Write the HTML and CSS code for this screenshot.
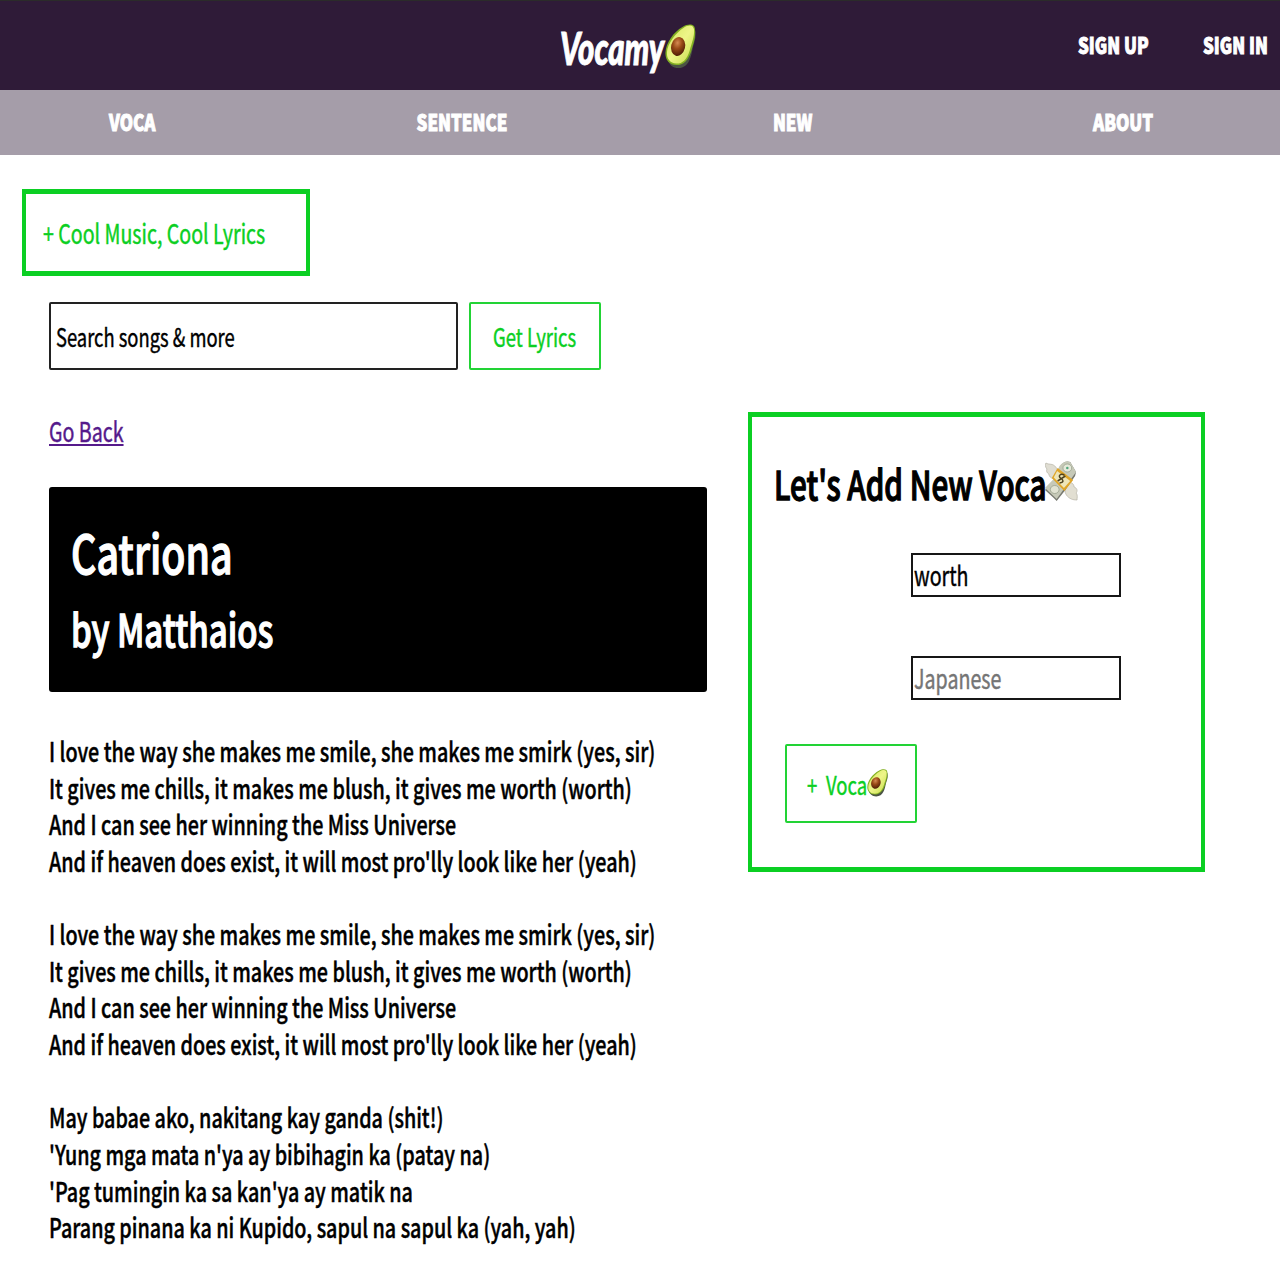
FILE: index.html
```html
<!DOCTYPE html>
<html lang="en">
<head>
<meta charset="utf-8">
<title>Vocamy</title>
<link rel="stylesheet" href="styles.css">
</head>
<body>
<svg class="defs" width="0" height="0" aria-hidden="true">
  <defs>
    <linearGradient id="flesh" x1="0" y1="0" x2="1" y2="1"><stop offset="0" stop-color="#d3e55c"/><stop offset=".5" stop-color="#eef589"/><stop offset="1" stop-color="#c3da45"/></linearGradient>
    <radialGradient id="pit" cx=".4" cy=".32" r=".7"><stop offset="0" stop-color="#d58a52"/><stop offset=".45" stop-color="#9a4a17"/><stop offset="1" stop-color="#4f1d06"/></radialGradient>
    <symbol id="avocado" viewBox="0 0 32 46" preserveAspectRatio="none">
      <path d="M30 4C33 10 31 17 29 23C27 33 25 45 14 45C8 45 4 41 3 37Z" fill="#4b5444"/>
      <path d="M18 3C25-1 31 0 31 6C32 13 29 21 27 28C24 37 19 42 12 42C4 42 0 36 .5 29C1 19 9 8 18 3Z" fill="#83b022"/>
      <path d="M19 4C25 0 29.500 1 30 6C30.500 13 27.500 20 25.500 27C23 36 18 40.500 12 40.500C5 40.500 1.500 35 2 29C2.500 20 11 9 19 4Z" fill="url(#flesh)"/>
      <ellipse cx="13.500" cy="23" rx="7.200" ry="9.700" transform="rotate(14 13.500 23)" fill="url(#pit)"/>
    </symbol>
    <symbol id="money" viewBox="0 0 34 40" preserveAspectRatio="none">
      <path d="M12 17C8 19 4 16 4 13C2 12 1 10 2 8C0 6 0 3 1 2C4 4 8 2 11 6C14 9 14 13 12 17Z" fill="#dfddd2" stroke="#b5b2a5" stroke-width=".7"/>
      <path d="M22 23C26 19 30 23 30 26C33 27 34 30 32 32C34 34 33 37 33 39C29 39 25 38 22 34C20 31 20 27 22 23Z" fill="#e2dfd2" stroke="#b5b2a5" stroke-width=".7"/>
      <path d="M0 29L8 20L15 6Q20-1 26 1L32 11L31 15L21 29L12 40L9 37Z" fill="#777970"/>
      <path d="M0 27L8 19L15 5Q20-1 26 1L32 11L21 26L12 38Z" fill="#c6c9b8"/>
      <ellipse cx="23" cy="7" rx="4.500" ry="4" fill="#e5e9d9" stroke="#929a86" stroke-width=".7"/>
      <circle cx="23" cy="7" r="1.300" fill="#4fa77c"/>
      <ellipse cx="10" cy="28.500" rx="4.500" ry="4" fill="#e1e3d3" stroke="#929a86" stroke-width=".7"/>
      <path d="M13 7L29 19L20 30L7 17Z" fill="#e0a526"/>
      <path d="M12.500 10L26 20L19.500 27L9 16.500Z" fill="#eee5b7"/>
      <path d="M20 14C16 12 13 15 16 17S20 21 15 22M13 20L21 15" fill="none" stroke="#4e431f" stroke-width="1.500"/>
    </symbol>
  </defs>
</svg>
<header class="top">
  <a class="logo"><span class="sq logo-text">Vocamy</span><svg class="logo-icon"><use href="#avocado"/></svg></a>
  <div class="auth"><span class="sq">SIGN UP</span><span class="sq">SIGN IN</span></div>
</header>
<nav class="menu"><span><b class="sq">VOCA</b></span><span><b class="sq">SENTENCE</b></span><span><b class="sq">NEW</b></span><span><b class="sq">ABOUT</b></span></nav>
<main>
  <div class="banner"><span class="sq">+ Cool Music, Cool Lyrics</span></div>
  <div class="search">
    <div class="search-field"><span class="sq">Search songs &amp; more</span></div>
    <div class="btn get"><span class="sq">Get Lyrics</span></div>
  </div>
  <div class="columns">
    <section class="song">
      <a class="back sq">Go Back</a>
      <div class="title">
        <h1><span class="sq">Catriona</span></h1>
        <h2><span class="sq">by Matthaios</span></h2>
      </div>
      <div class="lyrics sq">I love the way she makes me smile, she makes me smirk (yes, sir)
It gives me chills, it makes me blush, it gives me worth (worth)
And I can see her winning the Miss Universe
And if heaven does exist, it will most pro'lly look like her (yeah)

I love the way she makes me smile, she makes me smirk (yes, sir)
It gives me chills, it makes me blush, it gives me worth (worth)
And I can see her winning the Miss Universe
And if heaven does exist, it will most pro'lly look like her (yeah)

May babae ako, nakitang kay ganda (shit!)
'Yung mga mata n'ya ay bibihagin ka (patay na)
'Pag tumingin ka sa kan'ya ay matik na
Parang pinana ka ni Kupido, sapul na sapul ka (yah, yah)</div>
    </section>
    <section class="card">
      <h3><span class="sq">Let's Add New Voca</span><svg class="money"><use href="#money"/></svg></h3>
      <div class="field"><span class="sq">worth</span></div>
      <div class="field hint"><span class="sq">Japanese</span></div>
      <div class="btn add"><span class="sq plus">+</span><span class="sq voca">Voca</span><svg class="add-icon"><use href="#avocado"/></svg></div>
    </section>
  </div>
</main>
</body>
</html>
```
FILE: styles.css
```css
* { box-sizing: border-box; }
body {
  margin: 0;
  width: 1280px;
  height: 1280px;
  overflow: hidden;
  background: #fff;
  color: #000;
  font-family: "Noto Sans CJK JP", "Noto Sans", sans-serif;
  font-size: 26.5px;
}
h1, h2, h3 { margin: 0; font-weight: 500; -webkit-text-stroke: 1.3px; }
.defs { display: block; height: 0; }
svg { display: block; flex: none; }

/* Condensed lettering: each label is narrowed from its left edge. */
.sq {
  display: inline-block;
  white-space: nowrap;
  transform: scaleX(var(--s, .74));
  transform-origin: 0 50%;
}

.top {
  height: 90px;
  display: grid;
  grid-template-columns: 560px 1fr 202px;
  border-top: 1px solid #2b2b2a;
  background: #2f1b38;
  color: #fff;
}
.logo {
  grid-column: 2;
  display: flex;
}
.logo-text {
  --s: .69;
  width: 105px;
  font: italic 900 45px/94px Lato, sans-serif;
  -webkit-text-stroke: 1px;
}
.logo-icon { width: 31px; height: 45px; margin-top: 23px; }
.auth {
  --s: .77;
  display: grid;
  grid-template-columns: 125px 1fr;
  font: 900 22px/87px "Noto Sans CJK JP", sans-serif;
  -webkit-text-stroke: 1px;
}
.menu {
  --s: .77;
  height: 65px;
  margin: 0 -8px 0 -33px;
  display: grid;
  grid-template-columns: repeat(4, 1fr);
  background: #a59da9;
  color: #fff;
  text-align: center;
  font: 900 22px/63px "Noto Sans CJK JP", sans-serif;
  -webkit-text-stroke: 1px;
}
.menu .sq { font-weight: 900; transform-origin: 50% 50%; }

main {
  padding: 33.500px 0 0 22px;
  -webkit-text-stroke: .45px;
}
.banner {
  width: 287.500px;
  height: 87.500px;
  padding-left: 16.500px;
  border: solid #0bcf23;
  border-width: 5px 4px;
  color: #0bcf23;
  line-height: 77px;
}
.search {
  display: flex;
  gap: 11px;
  margin: 26px 0 0 27px;
  font-size: 25px;
  line-height: 64px;
}
.search-field {
  --s: .735;
  width: 409px;
  height: 68px;
  padding-left: 5px;
  border: 2px solid #222;
  border-radius: 2px;
}
.btn {
  border: 2px solid #22d335;
  border-radius: 2px;
  color: #0bcf23;
}
.get { width: 132px; height: 68px; padding-left: 22px; }

.columns {
  display: flex;
  gap: 41px;
  margin: 42px 0 0 27px;
}
.song { width: 658px; }
.back {
  display: block;
  width: max-content;
  height: 36px;
  line-height: 37px;
  color: #551a8b;
  text-decoration: underline;
}
.title {
  height: 205px;
  margin-top: 39px;
  padding: 25px 0 0 22px;
  border-radius: 3px;
  background: #000;
  color: #fff;
}
.title h1 { --s: .742; font-size: 53px; line-height: 78px; height: 83px; }
.title h2 { --s: .742; font-size: 44.500px; line-height: 65px; height: 65px; }
.lyrics {
  --s: .7455;
  display: block;
  width: max-content;
  margin-top: 41px;
  white-space: pre;
  font-weight: 500;
  line-height: 36.630px;
}

.card {
  width: 456.500px;
  height: 459.500px;
  padding: 36px 0 0 22px;
  border: solid #0bcf23;
  border-width: 5px 4px;
}
.card h3 {
  display: flex;
  height: 61px;
  font-size: 40px;
  line-height: 60px;
}
.card h3 .sq { width: 271px; }
.money { width: 33px; height: 40px; margin-top: 8px; }
.field {
  width: 210px;
  height: 44px;
  margin: 39px 0 0 137px;
  padding-left: 1px;
  border: 2px solid #161616;
  line-height: 39px;
}
.hint { margin-top: 59px; color: #757575; }
.add {
  display: flex;
  width: 132px;
  height: 79px;
  margin: 44px 0 0 11px;
  padding-left: 20px;
  font-size: 25px;
  line-height: 76px;
}
.plus { width: 19px; }
.voca { width: 41px; }
.add-icon { width: 21px; height: 28px; margin-top: 23px; }
```
